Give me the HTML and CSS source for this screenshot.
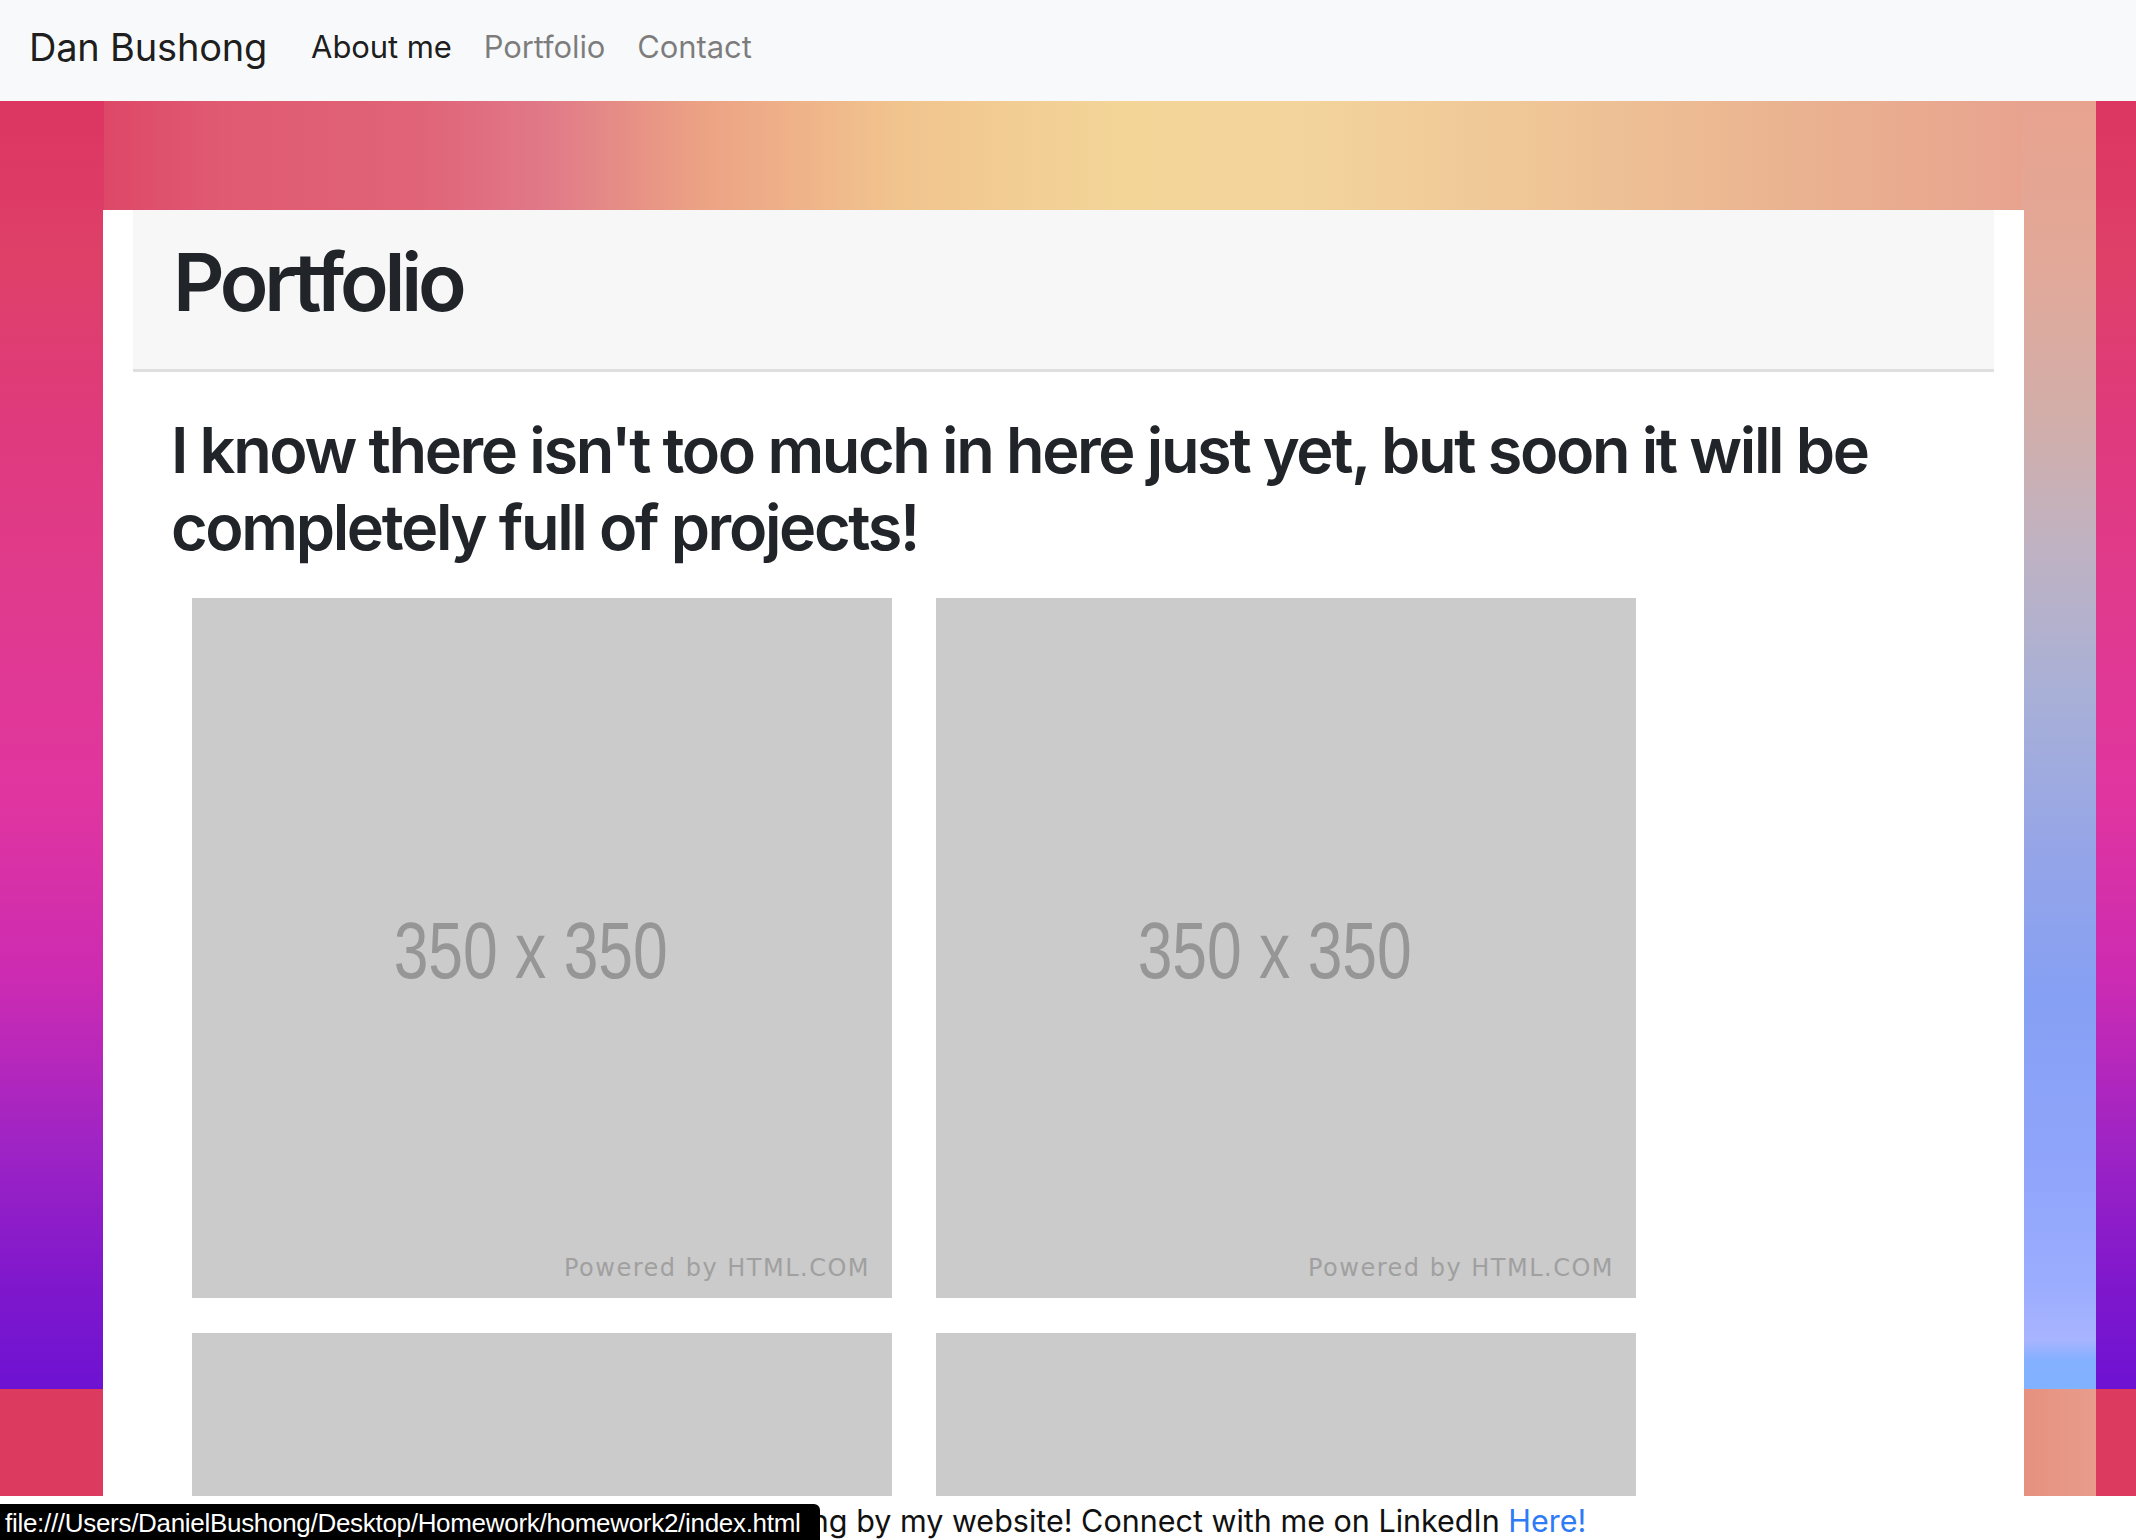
FILE: index.html
```html
<!DOCTYPE html>
<html lang="en">
<head>
<meta charset="utf-8">
<title>Portfolio - Dan Bushong</title>
<link rel="stylesheet" href="styles.css">
</head>
<body>
<nav class="navbar">
  <a class="brand" href="#">Dan Bushong</a>
  <a class="nav-link active" href="#">About me</a>
  <a class="nav-link" href="#">Portfolio</a>
  <a class="nav-link" href="#">Contact</a>
</nav>
<main class="page">
  <div class="container">
    <header class="jumbotron">
      <h1 class="title">Portfolio</h1>
    </header>
    <section class="content">
      <h2 class="intro">I know there isn't too much in here just yet, but soon it will be completely full of projects!</h2>
      <div class="gallery">
        <div class="ph"><span class="ph-size">350 x 350</span><span class="ph-credit">Powered by HTML.COM</span></div>
        <div class="ph"><span class="ph-size">350 x 350</span><span class="ph-credit">Powered by HTML.COM</span></div>
        <div class="ph"><span class="ph-size">350 x 350</span><span class="ph-credit">Powered by HTML.COM</span></div>
        <div class="ph"><span class="ph-size">350 x 350</span><span class="ph-credit">Powered by HTML.COM</span></div>
      </div>
    </section>
  </div>
</main>
<footer class="footer">Thank you for stopping by my website! Connect with me on LinkedIn <a class="footer-link" href="#">Here!</a></footer>
<div class="status">file:///Users/DanielBushong/Desktop/Homework/homework2/index.html</div>
</body>
</html>
```
FILE: styles.css
```css
html, body {
  margin: 0;
  padding: 0;
}

body {
  font-family: Inter, "Noto Sans", "Liberation Sans", sans-serif;
  color: #212529;
  background-color: #ffffff;
  background-repeat: no-repeat;
  background-image:
    linear-gradient(to right, #dc3a5e 0px, #dc3a5e 2024px, #e6917f 2024px, #e89c8c 2096px, #dc3a5e 2096px, #dc3a5e 2136px),
    linear-gradient(to bottom, #dc3562 100px, #de4068 260px, #df3a7c 420px, #e03a8e 600px, #e035a0 800px, #cc2bb2 980px, #a024c4 1140px, #8018cc 1280px, #6e12d2 1389px),
    linear-gradient(to bottom, #dc3562 100px, #de4068 260px, #df3a7c 420px, #e03a8e 600px, #e035a0 800px, #cc2bb2 980px, #a024c4 1140px, #8018cc 1280px, #6e12d2 1389px),
    linear-gradient(to bottom, #e8a38f 100px, #e2a898 260px, #d2aeaa 420px, #bdb2c4 560px, #a8b0d8 700px, #94a4e8 860px, #86a0f4 1000px, #8ea4fa 1150px, #9aacfe 1280px, #a8b4ff 1340px, #84b0ff 1360px, #80b2ff 1389px),
    linear-gradient(to right, #dc3562 0px, #de4868 104px, #e05a72 220px, #e06478 420px, #e07888 540px, #eca284 700px, #f1c48e 900px, #f3d598 1120px, #f3d49c 1300px, #efc496 1560px, #eab290 1800px, #e8a38f 2022px, #e8a38f 2096px);
  background-size:
    2136px 200px,
    40px 1389px,
    104px 1389px,
    74px 1389px,
    2096px 250px;
  background-position:
    0 1389px,
    2096px 0,
    0 0,
    2022px 0,
    0 0;
}

a {
  text-decoration: none;
}

/* Navbar */
.navbar {
  height: 101px;
  box-sizing: border-box;
  background: #f8f9fa;
  display: flex;
  align-items: center;
  padding: 0 29px 8px;
}

.brand {
  font-size: 38px;
  color: rgba(0, 0, 0, 0.9);
  margin-right: 28px;
  letter-spacing: -0.2px;
}

.nav-link {
  font-size: 31px;
  padding: 0 16px;
  color: rgba(0, 0, 0, 0.5);
  letter-spacing: -0.1px;
}

.nav-link.active {
  color: rgba(0, 0, 0, 0.9);
}

/* Page */
.page {
  padding-top: 109px;
}

.container {
  margin-left: 103px;
  width: 1921px;
  box-sizing: border-box;
  background: #ffffff;
  padding: 0 30px 80px;
}

.jumbotron {
  background: #f7f7f7;
  padding: 24px 40px 39px;
  border-bottom: 3px solid #dfdfdf;
}

.title {
  margin: 0;
  font-size: 80px;
  line-height: 96px;
  font-weight: 600;
  letter-spacing: -4.2px;
  color: #212529;
}

.content {
  padding: 0 38px;
}

.intro {
  margin: 40px 0 32px;
  font-size: 63px;
  line-height: 76.8px;
  font-weight: 600;
  letter-spacing: -2.35px;
  color: #212529;
}

.gallery {
  display: flex;
  flex-wrap: wrap;
  gap: 35px 44px;
  padding-left: 21px;
}

.ph {
  width: 700px;
  height: 700px;
  background: #cbcbcb;
  display: grid;
}

.ph > span {
  grid-area: 1 / 1;
}

.ph-size {
  place-self: center;
  font-family: "Liberation Sans", Arial, sans-serif;
  font-size: 80px;
  color: #969696;
  transform: scaleX(0.78);
  margin: 6px 22px 0 0;
}

.ph-credit {
  align-self: end;
  justify-self: end;
  margin: 0 22px 16px 0;
  font-family: "DejaVu Sans", sans-serif;
  font-size: 24px;
  letter-spacing: 1.5px;
  color: #a0a0a0;
}

/* Footer */
.footer {
  position: fixed;
  left: 0;
  right: 0;
  bottom: 0;
  height: 44px;
  line-height: 44px;
  box-sizing: border-box;
  padding: 3px 36px 0 0;
  background: #ffffff;
  text-align: center;
  font-size: 30.5px;
  color: #111111;
}

.footer-link {
  color: #2f7bf5;
}

.status {
  position: fixed;
  left: 0;
  bottom: 0;
  height: 36px;
  line-height: 38px;
  padding: 0 19px 0 5px;
  background: #000000;
  color: #ffffff;
  font-family: "Liberation Sans", Arial, sans-serif;
  font-size: 26px;
  letter-spacing: -0.3px;
  border-top-right-radius: 6px;
}
```
